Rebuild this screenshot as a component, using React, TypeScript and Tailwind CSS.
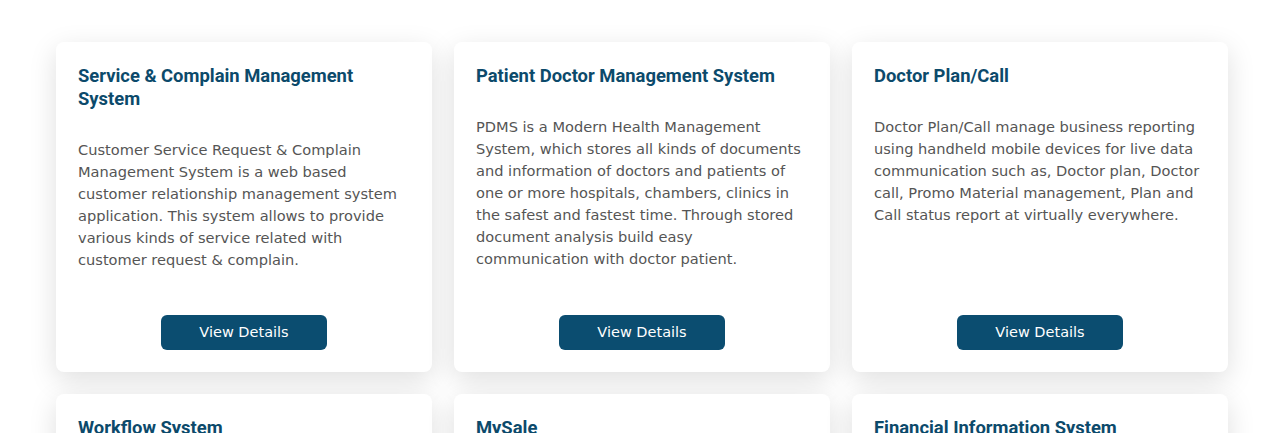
const projects = [
  {
    title: 'Service & Complain Management System',
    body: 'Customer Service Request & Complain Management System is a web based customer relationship management system application. This system allows to provide various kinds of service related with customer request & complain.',
  },
  {
    title: 'Patient Doctor Management System',
    body: 'PDMS is a Modern Health Management System, which stores all kinds of documents and information of doctors and patients of one or more hospitals, chambers, clinics in the safest and fastest time. Through stored document analysis build easy communication with doctor patient.',
  },
  {
    title: 'Doctor Plan/Call',
    body: 'Doctor Plan/Call manage business reporting using handheld mobile devices for live data communication such as, Doctor plan, Doctor call, Promo Material management, Plan and Call status report at virtually everywhere.',
  },
  {
    title: 'Workflow System',
    body: 'Workflow system automates the approval process of an organization.',
  },
  {
    title: 'MySale',
    body: 'MySale is a sales management application.',
  },
  {
    title: 'Financial Information System',
    body: 'Financial Information System for organizations.',
  },
]

function ProjectCard({ title, body }: { title: string; body: string }) {
  return (
    <div className="flex h-[330px] flex-col rounded-lg bg-white px-[22px] pt-[22px] pb-[22px] shadow-[0_8px_28px_rgba(0,0,0,0.13)]">
      <h3 className="font-['Roboto',sans-serif] text-[18.4px] leading-[23px] font-bold text-[#0c4a6b]">{title}</h3>
      <p className="mt-[29px] font-['DejaVu_Sans',sans-serif] text-[14.6px] leading-[22px] text-[#555555]">
        {body}
      </p>
      <div className="mt-auto flex justify-center">
        <button
          type="button"
          className="h-[35px] w-[166px] rounded-md bg-[#0b4d70] pt-px font-['DejaVu_Sans',sans-serif] text-[14.5px] text-white"
        >
          View Details
        </button>
      </div>
    </div>
  )
}

export default function App() {
  return (
    <div className="h-[433px] overflow-hidden bg-white pt-[42px]">
      <div className="ml-[56px] grid w-[1172px] grid-cols-3 gap-[22px]">
        {projects.map((p) => (
          <ProjectCard key={p.title} title={p.title} body={p.body} />
        ))}
      </div>
    </div>
  )
}
